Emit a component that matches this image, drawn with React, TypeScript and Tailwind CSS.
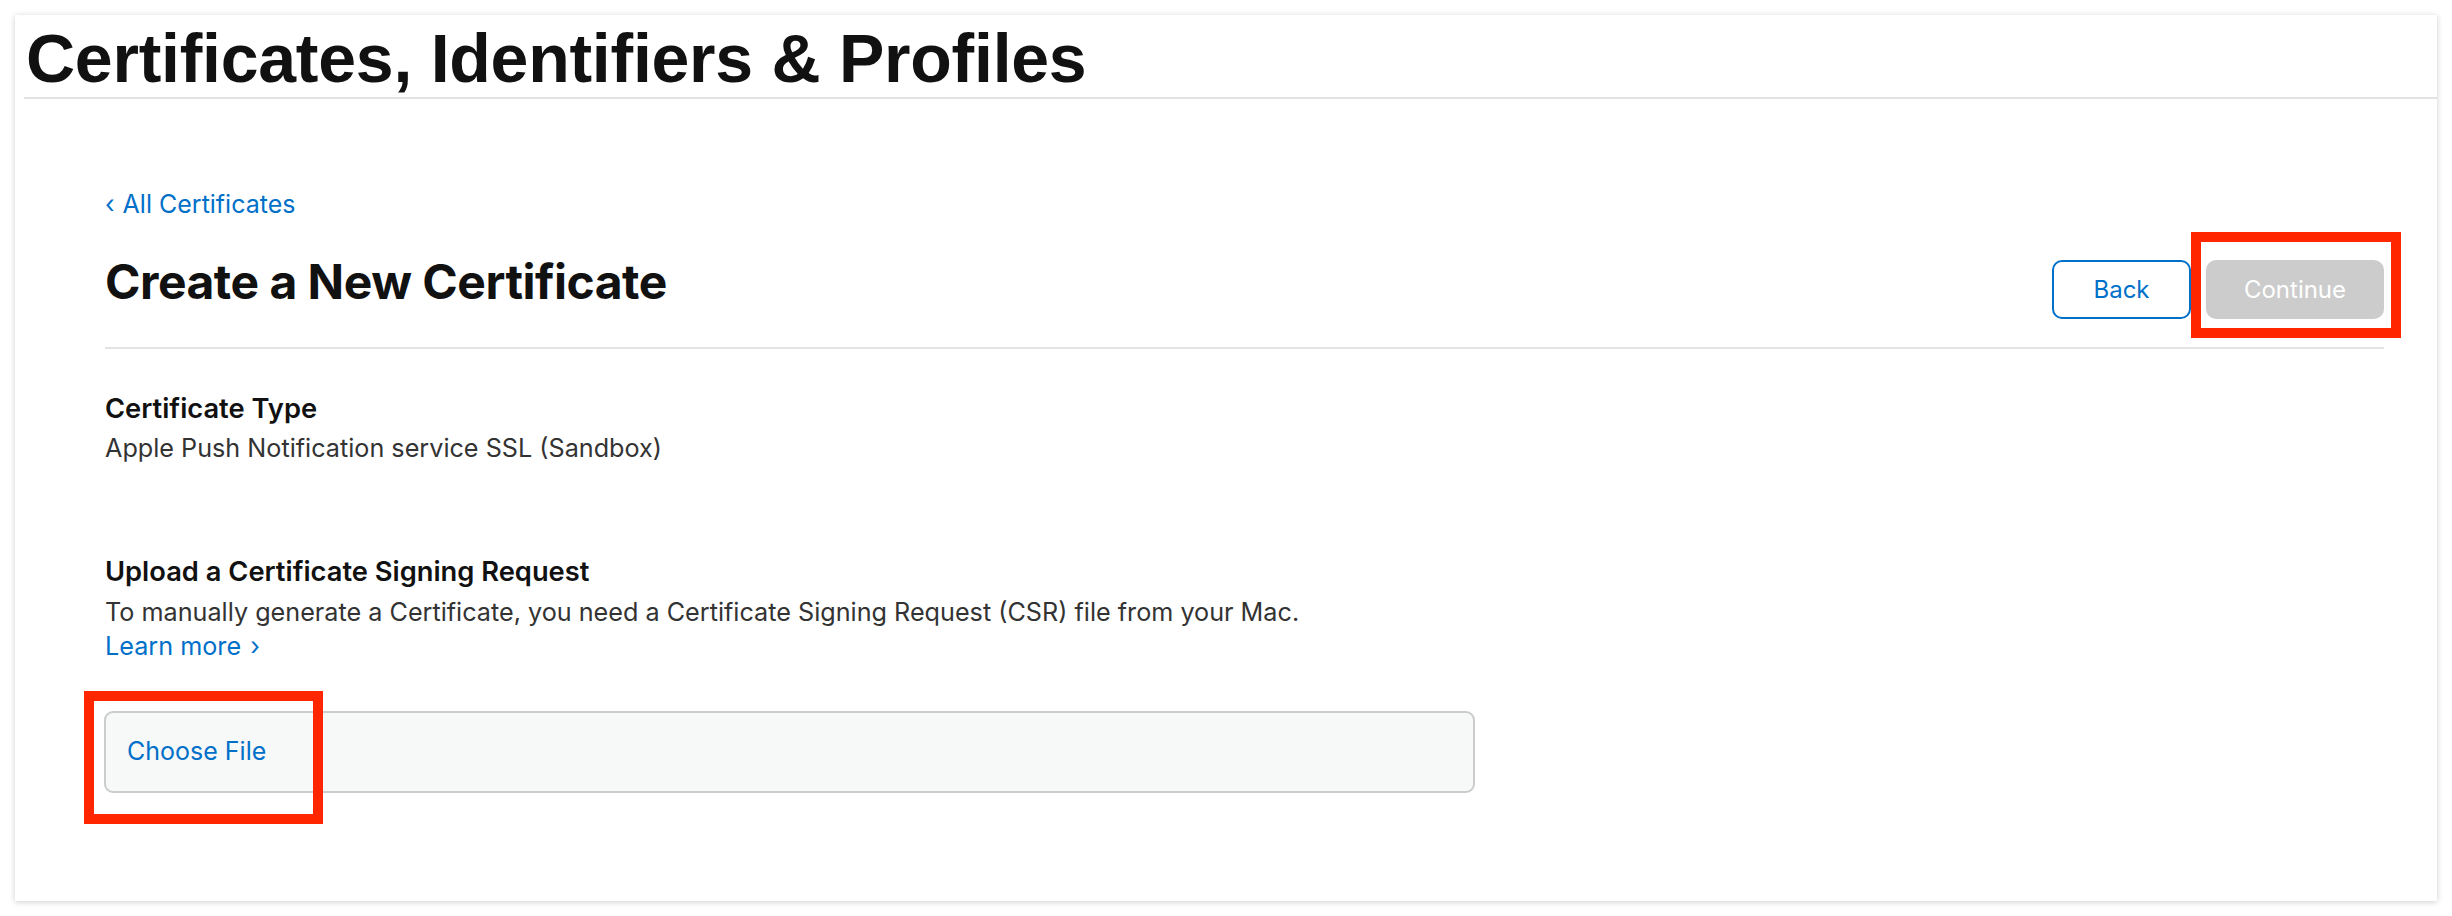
const SANS = "font-['Inter','Noto_Sans',sans-serif]";

export default function App() {
  return (
    <div className={`w-full h-[916px] bg-white pt-[15px] pl-[15px] ${SANS}`}>
      <div className="relative w-[2422px] h-[886px] bg-white shadow-[0_1px_6px_rgba(0,0,0,0.2)]">
        {/* page header */}
        <div className="ml-[9px] h-[84px] border-b-2 border-[#e3e3e3]">
          <h1 className="pl-[2px] pt-[3px] text-[68px] leading-[80px] font-bold text-[#111] tracking-[-0.25px] font-['Liberation_Sans',sans-serif]">
            Certificates, Identifiers &amp; Profiles
          </h1>
        </div>

        <div className="pl-[90px] pr-[53px]">
          <a className="block mt-[90px] text-[25px] leading-[30px] text-[#0070c9]">
            <span className="mr-[8px]">‹</span>All Certificates
          </a>

          <div className="mt-[34px] flex justify-between items-start pb-[28px] border-b-2 border-[#e3e3e3]">
            <h2 className="text-[48px] leading-[58px] font-bold text-[#111] tracking-[-0.5px]">
              Create a New Certificate
            </h2>
            <div className="flex gap-[15px] mt-[7px]">
              <button className="w-[139px] h-[59px] rounded-[10px] border-2 border-[#0070c9] text-[24px] text-[#0070c9] bg-white">
                Back
              </button>
              <div className="relative">
                <button className="w-[178px] h-[59px] rounded-[10px] bg-[#cccccc] text-[24px] text-white">
                  Continue
                </button>
                <div className="absolute -left-[15px] -top-[28px] -right-[17px] -bottom-[19px] border-[10px] border-[#ff2600]" />
              </div>
            </div>
          </div>

          <div className="mt-[43px] text-[27.3px] leading-[34px] font-semibold text-[#111]">Certificate Type</div>
          <div className="mt-[5px] text-[25.2px] leading-[34px] text-[#333]">
            Apple Push Notification service SSL (Sandbox)
          </div>

          <div className="mt-[90px] text-[27.3px] leading-[34px] font-semibold text-[#111]">
            Upload a Certificate Signing Request
          </div>
          <div className="mt-[6px] text-[25.2px] leading-[34px] text-[#333]">
            To manually generate a Certificate, you need a Certificate Signing Request (CSR) file from your Mac.
          </div>
          <a className="block text-[25.2px] leading-[34px] text-[#0070c9]">
            Learn more <span className="ml-[2px]">›</span>
          </a>

          <div className="relative mt-[48px] -ml-[1px] w-[1371px] h-[82px] rounded-[9px] border-2 border-[#cccccc] bg-[#f7f8f8] flex items-center pl-[21px]">
            <span className="text-[25px] text-[#0070c9]">Choose File</span>
            <div className="absolute -left-[22px] -top-[22px] w-[239px] h-[133px] border-[10px] border-[#ff2600]" />
          </div>
        </div>
      </div>
    </div>
  );
}
